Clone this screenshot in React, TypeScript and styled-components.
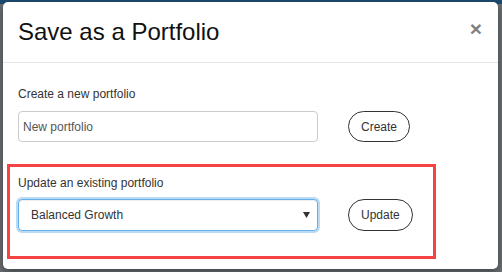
import React, { useState } from 'react';
import styled, { createGlobalStyle } from 'styled-components';

const GlobalStyle = createGlobalStyle`
  html, body {
    margin: 0;
    padding: 0;
    width: 502px;
    height: 272px;
    overflow: hidden;
  }

  body {
    font-family: "Liberation Sans", Arial, sans-serif;
    background: linear-gradient(180deg, #1d4b72 0, #1d4b72 4px, #6a6e72 4px, #6a6e72 100%);
  }
`;

const Backdrop = styled.div`
  display: flex;
  box-sizing: border-box;
  width: 502px;
  height: 272px;
  padding: 2px 4px 3px 3px;
`;

const Modal = styled.div`
  display: flex;
  flex-direction: column;
  flex: 1;
  background: #fff;
  border-radius: 5px;
  box-shadow: 0 3px 9px rgba(0, 0, 0, 0.4);
  overflow: hidden;
`;

const Header = styled.div`
  display: flex;
  align-items: center;
  justify-content: space-between;
  padding: 13px 16px 13px 15px;
  border-bottom: 1px solid #e5e5e5;
`;

const Title = styled.h4`
  margin: 0;
  font-size: 24px;
  font-weight: 400;
  line-height: 34px;
  color: #111;
`;

const Close = styled.button`
  padding: 0;
  border: 0;
  background: transparent;
  font-family: "Liberation Sans", Arial, sans-serif;
  font-size: 21px;
  font-weight: 700;
  line-height: 1;
  color: #000;
  opacity: 0.5;
  cursor: pointer;
  margin-top: -8px;
`;

const Body = styled.div`
  display: flex;
  flex-direction: column;
  padding: 23px 15px 0;
`;

const Section = styled.section<{ $highlight?: boolean }>`
  display: flex;
  flex-direction: column;
  gap: 8px;
  ${({ $highlight }) =>
    $highlight &&
    `
    box-sizing: border-box;
    width: 429px;
    height: 95px;
    margin: 22px 0 0 -11px;
    padding: 8px 0 0 8px;
    border: 3px solid #f44343;
    gap: 7px;
  `}
`;

const Label = styled.label`
  font-size: 12px;
  line-height: 17px;
  color: #333;
`;

const Row = styled.div`
  display: flex;
  align-items: center;
  gap: 30px;
`;

const TextInput = styled.input`
  box-sizing: border-box;
  width: 300px;
  height: 31px;
  padding: 0 4px;
  border: 1px solid #ccc;
  border-radius: 4px;
  font-family: "Liberation Sans", Arial, sans-serif;
  font-size: 12px;
  color: #555;
  outline: none;

  &::placeholder {
    color: #555;
    opacity: 1;
  }
`;

const SelectWrap = styled.div`
  position: relative;
  width: 300px;
  height: 32px;
`;

const Select = styled.select`
  appearance: none;
  box-sizing: border-box;
  width: 100%;
  height: 100%;
  padding: 0 24px 0 12px;
  border: 1px solid #66afe9;
  border-radius: 4px;
  background: #fff;
  box-shadow: inset 0 1px 1px rgba(0, 0, 0, 0.075), 0 0 0 2px rgba(102, 175, 233, 0.45);
  font-family: "Liberation Sans", Arial, sans-serif;
  font-size: 12px;
  color: #333;
  outline: none;
`;

const Arrow = styled.svg`
  position: absolute;
  right: 8px;
  top: 13px;
  pointer-events: none;
`;

const PillButton = styled.button<{ $tall?: boolean }>`
  box-sizing: border-box;
  height: ${({ $tall }) => ($tall ? 32 : 31)}px;
  padding: 0 12px;
  border: 1px solid #333;
  border-radius: 16px;
  background: #fff;
  font-family: "Liberation Sans", Arial, sans-serif;
  font-size: 12px;
  color: #333;
  cursor: pointer;
`;

const portfolios = ['Balanced Growth', 'Conservative Income', 'Aggressive Growth'];

const App: React.FC = () => {
  const [name, setName] = useState('');
  const [selected, setSelected] = useState(portfolios[0]);

  return (
    <>
      <GlobalStyle />
      <Backdrop>
        <Modal>
          <Header>
            <Title>Save as a Portfolio</Title>
            <Close aria-label="Close">×</Close>
          </Header>

          <Body>
            <Section>
              <Label htmlFor="new-portfolio">Create a new portfolio</Label>
              <Row>
                <TextInput
                  id="new-portfolio"
                  placeholder="New portfolio"
                  value={name}
                  onChange={(e) => setName(e.target.value)}
                />
                <PillButton>Create</PillButton>
              </Row>
            </Section>

            <Section $highlight>
              <Label htmlFor="existing-portfolio">Update an existing portfolio</Label>
              <Row>
                <SelectWrap>
                  <Select
                    id="existing-portfolio"
                    value={selected}
                    onChange={(e) => setSelected(e.target.value)}
                  >
                    {portfolios.map((p) => (
                      <option key={p} value={p}>
                        {p}
                      </option>
                    ))}
                  </Select>
                  <Arrow width="7" height="6" viewBox="0 0 7 6">
                    <path d="M0 0 H7 L3.5 6 Z" fill="#333" />
                  </Arrow>
                </SelectWrap>
                <PillButton $tall>Update</PillButton>
              </Row>
            </Section>
          </Body>
        </Modal>
      </Backdrop>
    </>
  );
};

export default App;
